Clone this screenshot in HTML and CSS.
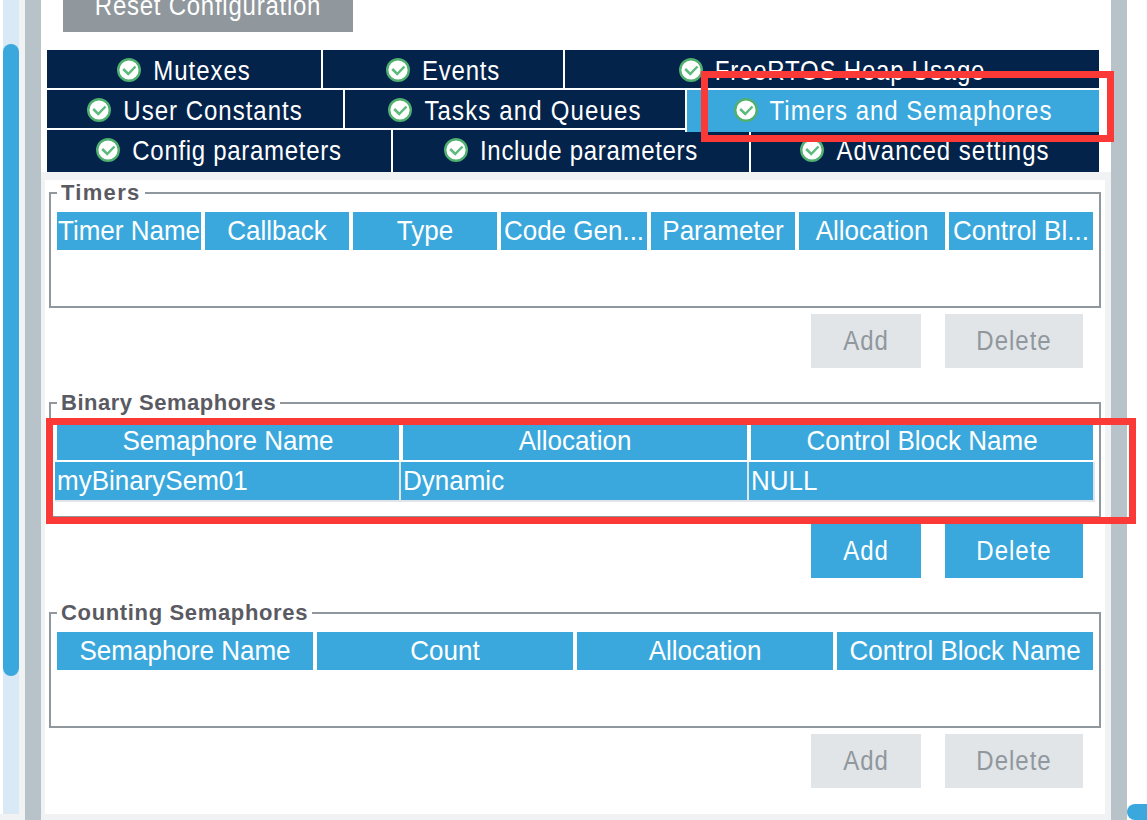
FILE: index.html
```html
<!DOCTYPE html>
<html lang="en">
<head>
<meta charset="utf-8">
<title>FreeRTOS Configuration</title>
<link rel="stylesheet" href="styles.css">
</head>
<body>
<svg class="defs" width="0" height="0">
  <symbol id="ok" viewBox="0 0 24 24">
    <circle cx="12" cy="12" r="10.8" fill="#fff" stroke="#4fb06f" stroke-width="2.4"/>
    <path d="M6.2 11l5 5 7.3-7.5" fill="none" stroke="#5cbb7c" stroke-width="2.5"/>
  </symbol>
</svg>
<div class="app">
  <div class="scroll"><div class="thumb"></div></div>
  <div class="divider"></div>
  <main class="main">
    <div class="top">
      <button class="reset"><span class="t">Reset Configuration</span></button>
      <nav class="tabs">
        <div class="row r1">
          <div class="tab"><svg class="icon"><use href="#ok"/></svg><span class="t">Mutexes</span></div>
          <div class="tab events"><svg class="icon"><use href="#ok"/></svg><span class="t">Events</span></div>
          <div class="tab heap"><svg class="icon"><use href="#ok"/></svg><span class="t">FreeRTOS Heap Usage</span></div>
        </div>
        <div class="row r2">
          <div class="tab"><svg class="icon"><use href="#ok"/></svg><span class="t">User Constants</span></div>
          <div class="tab tasks"><svg class="icon"><use href="#ok"/></svg><span class="t">Tasks and Queues</span></div>
          <div class="tab active"><svg class="icon"><use href="#ok"/></svg><span class="t">Timers and Semaphores</span></div>
        </div>
        <div class="row r3">
          <div class="tab config"><svg class="icon"><use href="#ok"/></svg><span class="t">Config parameters</span></div>
          <div class="tab include"><svg class="icon"><use href="#ok"/></svg><span class="t">Include parameters</span></div>
          <div class="tab"><svg class="icon"><use href="#ok"/></svg><span class="t">Advanced settings</span></div>
        </div>
      </nav>
    </div>
    <div class="panel">
      <fieldset class="group">
        <legend class="l-timers">Timers</legend>
        <div class="head timers">
          <div><span>Timer Name</span></div><div><span>Callback</span></div><div><span>Type</span></div><div><span>Code Gen...</span></div><div><span>Parameter</span></div><div><span>Allocation</span></div><div><span>Control Bl...</span></div>
        </div>
      </fieldset>
      <div class="actions off"><button><span class="t">Add</span></button><button><span class="t">Delete</span></button></div>
      <fieldset class="group">
        <legend class="l-binary">Binary Semaphores</legend>
        <div class="head binary">
          <div><span>Semaphore Name</span></div><div><span>Allocation</span></div><div><span>Control Block Name</span></div>
        </div>
        <div class="record">
          <div><span>myBinarySem01</span></div><div><span>Dynamic</span></div><div><span>NULL</span></div>
        </div>
      </fieldset>
      <div class="actions"><button><span class="t">Add</span></button><button><span class="t">Delete</span></button></div>
      <fieldset class="group">
        <legend>Counting Semaphores</legend>
        <div class="head counting">
          <div><span>Semaphore Name</span></div><div><span>Count</span></div><div><span>Allocation</span></div><div><span>Control Block Name</span></div>
        </div>
      </fieldset>
      <div class="actions off"><button><span class="t">Add</span></button><button><span class="t">Delete</span></button></div>
    </div>
  </main>
  <div class="divider"></div>
  <div class="side"><div class="hthumb"></div></div>
  <div class="mark mark-tab"></div>
  <div class="mark mark-table"></div>
</div>
</body>
</html>
```

FILE: styles.css
```css
* { box-sizing: border-box; }
body { margin: 0; overflow: hidden; font-family: "Liberation Sans", Arial, sans-serif; background: #f0f2f4; }
.defs { position: absolute; }
button { border: 0; padding: 0; font: inherit; }

.app { position: relative; display: flex; width: 1147px; height: 820px; overflow: hidden; }
.scroll { width: 25px; height: 814px; padding-top: 44px; border-left: 3px solid #fff; border-right: 6px solid #f0f2f4; background: #d9e9f6; }
.thumb { height: 632px; border-radius: 8px; background: #3aa8dc; }
.divider { width: 16px; background: #b7c3c9; }
.main { width: 1070px; }
.side { flex: 1; display: flex; align-items: flex-end; background: #fff; }
.hthumb { flex: 1; height: 16px; border-radius: 8px 0 0 8px; background: #3aa8dc; }

.t { display: inline-block; font-size: 24px; letter-spacing: 1px; white-space: nowrap; transform: translateY(-.5px) scaleY(1.16); }

.top { height: 172px; padding: 0 12px 0 6px; background: #fff; overflow: hidden; }
.reset { display: block; width: 290px; height: 54px; margin: -22px 0 18px 16px; background: #90979d; color: #fff; }
.reset .t { letter-spacing: .75px; transform: translateY(.5px) scaleY(1.16); }
.tabs { display: grid; grid-template-rows: 38px 38px 42px; gap: 2px; }
.row { display: grid; gap: 2px; }
.r1 { grid-template-columns: 274px 240px 534px; }
.r2 { grid-template-columns: 296px 340px 412px; }
.r3 { grid-template-columns: 344px 356px 348px; }
.tab { display: flex; justify-content: center; align-items: center; height: 38px; gap: 12px; background: #03234b; color: #fff; line-height: 38px; }
.tab .t { transform: translateY(2px) scaleY(1.16); }
.tab.events .t, .tab.heap .t { letter-spacing: .8px; }
.tab.tasks .t { letter-spacing: 1.15px; }
.tab.config .t, .tab.include .t { letter-spacing: .7px; }
.r3 .tab { height: 42px; padding-bottom: 4px; }
.tab.active { height: 42px; padding-bottom: 4px; background: #3aa8dc; box-shadow: -2px 0 #fff; z-index: 1; }
.icon { width: 24px; height: 24px; margin-top: 2px; flex: none; }

.panel { height: 634px; margin: 8px 6px 0 4px; padding: 1px 4px 0; background: #fff; }
.group { height: 127px; margin: 0; padding: 0 0 0 6px; border: 2px solid #90979d; min-width: 0; }
legend { height: 24px; padding: 0 4px; font-size: 22px; font-weight: 700; line-height: 24px; letter-spacing: .65px; color: #5a5a62; }
.l-timers { letter-spacing: 1.3px; }
.l-binary { letter-spacing: .5px; }
.head { display: grid; gap: 4px; height: 38px; margin-top: 7px; }
.timers { grid-template-columns: 144px 144px 144px 146px 144px 146px 144px; }
.binary { grid-template-columns: 342px 344px 342px; }
.counting { grid-template-columns: repeat(4, 256px); }
.head div { display: flex; justify-content: center; background: #3aa8dc; }
.head span, .record span { font-size: 26px; line-height: 38px; color: #fff; white-space: nowrap; transform: translateY(-.5px) scaleY(1.07); }
.record { display: grid; grid-template-columns: 344px 346px 344px; gap: 2px; width: 1040px; height: 40px; margin: 2px 0 0 -2px; background: #e1e4e8; border-right: 2px solid #e1e4e8; border-bottom: 2px solid #e1e4e8; }
.record div { display: flex; padding-left: 2px; background: #3aa8dc; }

.actions { display: flex; justify-content: flex-end; gap: 24px; height: 54px; margin: 6px 18px 23px 0; }
.actions button { width: 110px; background: #3aa8dc; color: #fff; }
.actions button + button { width: 138px; }
.actions.off button { background: #e1e5e8; color: #90979d; }

/* Annotation frames drawn over the window */
.mark { position: absolute; border: 7px solid #fb3936; z-index: 2; }
.mark-tab { left: 701px; top: 71px; width: 413px; height: 71px; }
.mark-table { left: 46px; top: 418px; width: 1090px; height: 106px; }
```
